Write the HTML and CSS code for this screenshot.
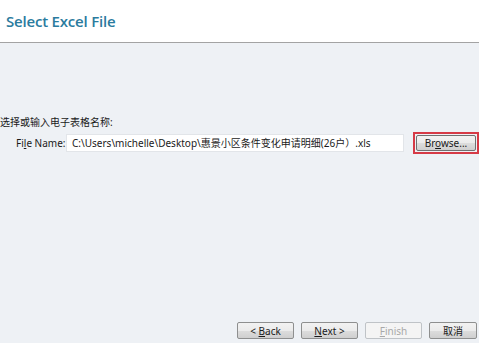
FILE: index.html
```html
<!DOCTYPE html>
<html lang="zh">
<head>
<meta charset="UTF-8">
<title>Select Excel File</title>
<link rel="stylesheet" href="styles.css">
</head>
<body>

<div class="header">
  <div class="title">Select Excel File</div>
</div>

<div class="content">
  <div class="prompt">选择或输入电子表格名称:</div>
  <div class="file-row">
    <label class="file-label">Fi<u>l</u>e Name:</label>
    <div class="file-input">C:\Users\michelle\Desktop\惠景小区条件变化申请明细(26户）.xls</div>
    <div class="browse-wrap">
      <button class="btn browse">Br<u>o</u>wse...</button>
    </div>
  </div>
</div>

<div class="footer">
  <button class="btn">&lt; <u>B</u>ack</button>
  <button class="btn"><u>N</u>ext &gt;</button>
  <button class="btn disabled"><u>F</u>inish</button>
  <button class="btn cancel">取消</button>
</div>

</body>
</html>
```

FILE: styles.css
```css
html,body{
  margin:0;
  height:100%;
}

body{
  font-family:"Noto Sans","Noto Sans CJK SC",sans-serif;
  font-size:10px;
  color:#1a1a1a;
  background:#eef1f5;
  display:flex;
  flex-direction:column;
  overflow:hidden;
}

.header{
  height:43px;
  background:#fff;
  border-bottom:1px solid #a3a3a3;
  box-sizing:border-box;
  padding:11px 0 0 6px;
}

.title{
  font-family:"Open Sans",sans-serif;
  font-weight:600;
  font-size:15px;
  color:#2a7b9e;
  letter-spacing:-0.2px;
}

.content{
  flex:1;
  padding-top:72px;
}

.prompt{
  height:14px;
  line-height:14px;
}

.file-row{
  display:flex;
  align-items:center;
  margin-top:3px;
}

.file-label{
  flex:0 0 50px;
  padding-left:16px;
  white-space:nowrap;
}

.file-input{
  flex:0 0 auto;
  width:331px;
  height:16px;
  line-height:16px;
  padding-left:5px;
  background:#fff;
  border:1px solid #e2e5e9;
  white-space:nowrap;
  overflow:hidden;
}

.browse-wrap{
  flex:0 0 auto;
  margin-left:9px;
  border:2px solid #d63a46;
  padding:1px;
}

.btn{
  font-family:"Noto Sans","Noto Sans CJK SC",sans-serif;
  font-size:10px;
  color:#1a1a1a;
  height:17px;
  width:57px;
  padding:0;
  border:1px solid #8e8f8f;
  border-radius:2px;
  background:linear-gradient(#f2f2f2 0%,#ebebeb 50%,#dddddd 51%,#cfcfcf 100%);
}

.browse{
  width:60px;
  height:16px;
  border-color:#707070;
}

.footer{
  display:flex;
  justify-content:flex-end;
  gap:7px;
  padding:0 2px 4px 0;
}

.disabled{
  color:#a8a8a8;
  border-color:#bfc3c7;
  background:#f4f4f4;
}

.cancel{
  width:48px;
}
```
